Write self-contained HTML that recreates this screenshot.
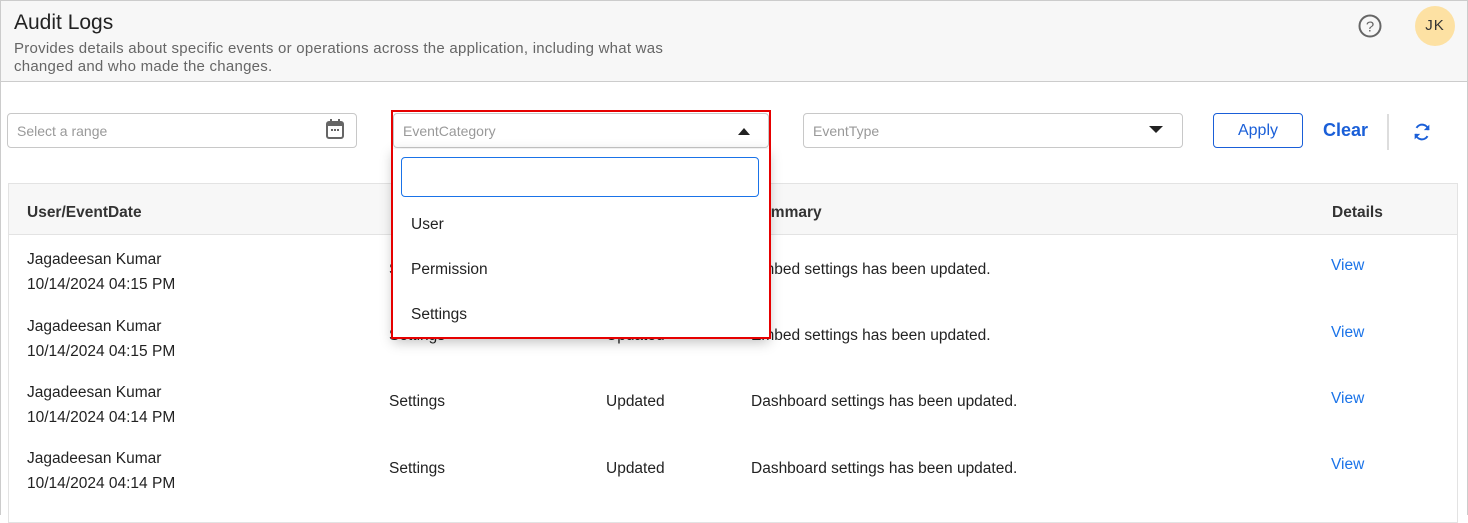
<!DOCTYPE html>
<html><head><style>
*{box-sizing:border-box;margin:0;padding:0}
body{width:1468px;height:515px;overflow:hidden;background:#fff;font-family:"Liberation Sans",sans-serif;color:#222;position:relative}
.frame{position:absolute;left:0;top:0;width:1468px;height:515px;border:1px solid #ccc;border-bottom:none}
.hdr{position:absolute;left:1px;top:1px;width:1466px;height:81px;background:#f7f7f7;border-bottom:1px solid #ccc}
.abs{position:absolute}
.inp{position:absolute;border:1px solid #c8c8c8;border-radius:4px;height:35px;top:113px;background:#fff;font-size:14px;color:#999;padding:9px 0 0 9px}
.cell{position:absolute;font-size:15.5px;color:#222}
.view{position:absolute;font-size:15.5px;color:#1a73e8}
</style></head><body>
<div class="frame"></div>
<div class="hdr"></div>
<div class="abs" style="left:14px;top:11px;font-size:21px;color:#222">Audit Logs</div>
<div class="abs" style="left:14px;top:40px;font-size:15px;letter-spacing:0.25px;color:#666;line-height:18px;width:760px">Provides details about specific events or operations across the application, including what was<br>changed and who made the changes.</div>
<svg class="abs" style="left:1357px;top:13px" width="26" height="26" viewBox="0 0 26 26"><circle cx="13" cy="13" r="10.5" fill="none" stroke="#666" stroke-width="2"/><text x="13" y="18.5" text-anchor="middle" font-size="15" font-family="Liberation Sans" fill="#666">?</text></svg>
<div class="abs" style="left:1415px;top:6px;width:40px;height:40px;border-radius:50%;background:#fde1a3;font-size:15px;text-align:center;line-height:40px;color:#333;letter-spacing:1px">JK</div>

<div class="inp" style="left:7px;width:350px">Select a range</div>
<svg class="abs" style="left:325px;top:118px" width="20" height="22" viewBox="0 0 20 22"><rect x="2" y="4" width="16" height="16" rx="2" fill="none" stroke="#666" stroke-width="2"/><rect x="2" y="4" width="16" height="4" fill="#666"/><rect x="5" y="1" width="2" height="4" fill="#666"/><rect x="13" y="1" width="2" height="4" fill="#666"/><rect x="6" y="11" width="2" height="2" fill="#666"/><rect x="9" y="11" width="2" height="2" fill="#666"/><rect x="12" y="11" width="2" height="2" fill="#666"/></svg>
<div class="inp" style="left:393px;width:376px">EventCategory</div>
<div class="abs" style="left:738px;top:128px;width:0;height:0;border-left:6px solid transparent;border-right:6px solid transparent;border-bottom:7px solid #222"></div>
<div class="inp" style="left:803px;width:380px">EventType</div>
<div class="abs" style="left:1149px;top:126px;width:0;height:0;border-left:7px solid transparent;border-right:7px solid transparent;border-top:7px solid #222"></div>
<div class="abs" style="left:1213px;top:113px;width:90px;height:35px;border:1px solid #1a5fd8;border-radius:4px;color:#1a5fd8;font-size:16px;text-align:center;line-height:33px">Apply</div>
<div class="abs" style="left:1323px;top:120px;color:#1a5fd8;font-size:18px;font-weight:bold">Clear</div>
<div class="abs" style="left:1387px;top:114px;width:2px;height:36px;background:#ddd"></div>
<svg class="abs" style="left:1411px;top:121px" width="22" height="22" viewBox="0 0 24 24"><path d="M19 10A7 7 0 0 0 6 7.5M5 14a7 7 0 0 0 13 2.5" fill="none" stroke="#1a5fd8" stroke-width="2.2"/><path d="M20 4v6h-6z M4 20v-6h6z" fill="#1a5fd8"/></svg>

<div class="abs" style="left:8px;top:183px;width:1450px;height:340px;border:1px solid #e3e3e3"></div>
<div class="abs" style="left:9px;top:184px;width:1448px;height:51px;background:#f7f7f7;border-bottom:1px solid #e3e3e3"></div>
<div class="cell" style="left:27px;top:204px;font-weight:bold;color:#333">User/EventDate</div>
<div class="cell" style="left:751px;top:204px;font-weight:bold;color:#333">Summary</div>
<div class="cell" style="left:1332px;top:204px;font-weight:bold;color:#333">Details</div>

<div class="cell" style="left:27px;top:247px;line-height:25px">Jagadeesan Kumar<br>10/14/2024 04:15 PM</div>
<div class="cell" style="left:389px;top:261px">Settings</div><div class="cell" style="left:606px;top:261px">Updated</div>
<div class="cell" style="left:751px;top:261px">Embed settings has been updated.</div><div class="view" style="left:1331px;top:257px">View</div>
<div class="cell" style="left:27px;top:314px;line-height:25px">Jagadeesan Kumar<br>10/14/2024 04:15 PM</div>
<div class="cell" style="left:389px;top:327px">Settings</div><div class="cell" style="left:606px;top:327px">Updated</div>
<div class="cell" style="left:751px;top:327px">Embed settings has been updated.</div><div class="view" style="left:1331px;top:324px">View</div>
<div class="cell" style="left:27px;top:380px;line-height:25px">Jagadeesan Kumar<br>10/14/2024 04:14 PM</div>
<div class="cell" style="left:389px;top:393px">Settings</div><div class="cell" style="left:606px;top:393px">Updated</div>
<div class="cell" style="left:751px;top:393px">Dashboard settings has been updated.</div><div class="view" style="left:1331px;top:390px">View</div>
<div class="cell" style="left:27px;top:446px;line-height:25px">Jagadeesan Kumar<br>10/14/2024 04:14 PM</div>
<div class="cell" style="left:389px;top:460px">Settings</div><div class="cell" style="left:606px;top:460px">Updated</div>
<div class="cell" style="left:751px;top:460px">Dashboard settings has been updated.</div><div class="view" style="left:1331px;top:456px">View</div>

<div class="abs" style="left:393px;top:149px;width:376px;height:189px;background:#fff;box-shadow:0 4px 12px rgba(0,0,0,.25)"></div>
<div class="abs" style="left:401px;top:157px;width:358px;height:40px;border:1px solid #1a73e8;border-radius:4px"></div>
<div class="cell" style="left:411px;top:216px">User</div>
<div class="cell" style="left:411px;top:261px">Permission</div>
<div class="cell" style="left:411px;top:306px">Settings</div>
<div class="abs" style="left:391px;top:110px;width:380px;height:229px;border:2px solid #e60000"></div>
</body></html>
